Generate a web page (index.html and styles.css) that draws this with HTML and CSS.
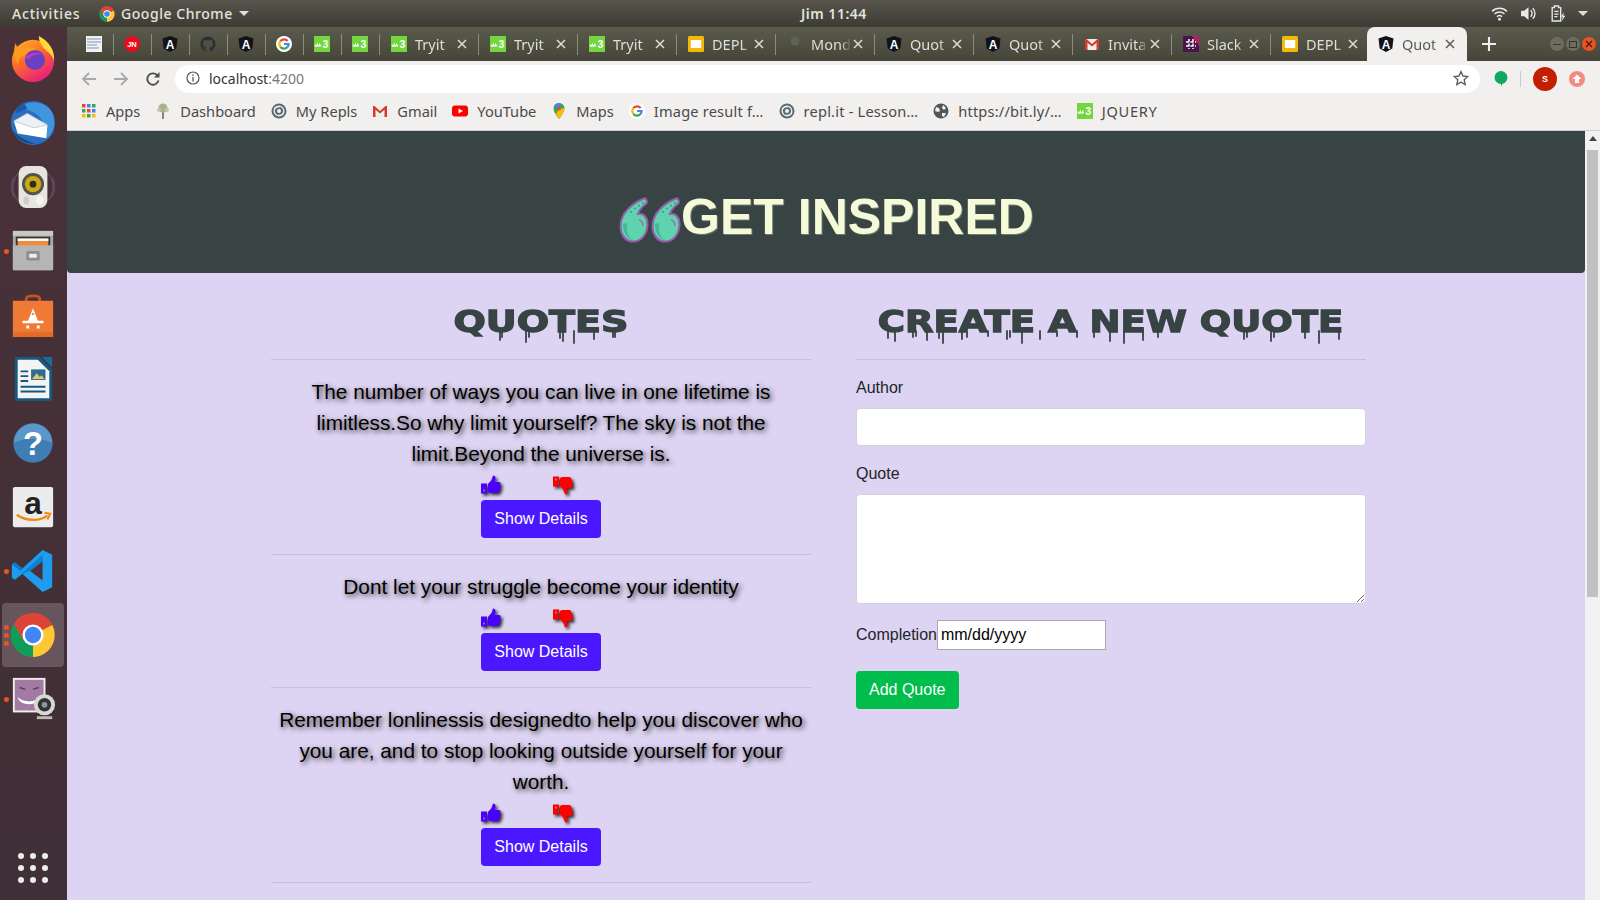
FILE: index.html
```html
<!DOCTYPE html>
<html lang="en">
<head>
<meta charset="utf-8">
<title>Quotes</title>
<link rel="stylesheet" href="styles.css">
</head>
<body>
<svg class="defs" aria-hidden="true">
  <symbol id="ng" viewBox="0 0 16 16"><path d="M8 0 15.500 2.600 14.300 12.500 8 16 1.700 12.500.5 2.600z" fill="#10131c"/><text x="8" y="12.600" text-anchor="middle" font-family="Liberation Sans" font-weight="700" font-size="12" fill="#fff">A</text></symbol>
  <symbol id="w3" viewBox="0 0 16 16"><rect width="16" height="16" fill="#73d63f"/><path d="M1 8.500c.5 2.500 1.500 2.500 2.300 0 .7 2.500 1.700 2.500 2.400 0 .4 1 .8 1.500 1.300 1.500" fill="none" stroke="#fff" stroke-width="1.200"/><text x="11.500" y="12" text-anchor="middle" font-family="Liberation Sans" font-weight="700" font-size="10.500" fill="#fff">3</text></symbol>
  <symbol id="slides" viewBox="0 0 16 16"><rect width="16" height="16" rx="1.500" fill="#f4b906"/><rect x="2.800" y="4" width="10.400" height="8" fill="#fff"/></symbol>
  <symbol id="gmail" viewBox="0 0 16 16"><rect x="1" y="3" width="14" height="11" fill="#eee"/><path d="M1 14V3h1.500L8 8l5.500-5H15v11h-2.500V6.800L8 10.500 3.500 6.800V14z" fill="#d33b2c"/></symbol>
  <symbol id="goog" viewBox="0 0 16 16"><circle cx="8" cy="8" r="8" fill="#fff"/><g fill="none" stroke-width="2.200"><path d="M11.700 5A4.700 4.700 0 0 0 4.300 5.200" stroke="#ea4335"/><path d="M4.300 5.200a4.700 4.700 0 0 0 0 5.600" stroke="#fbbc05"/><path d="M4.300 10.800a4.700 4.700 0 0 0 7.200 .3" stroke="#34a853"/><path d="M8 8h4.600a4.700 4.700 0 0 1-1.100 3.100" stroke="#4285f4"/></g></symbol>
  <symbol id="repl" viewBox="0 0 16 16"><circle cx="8" cy="8" r="7.500" fill="#5b6c74"/><circle cx="8" cy="8" r="4.800" fill="none" stroke="#f1f0ee" stroke-width="1.300"/><path d="M3 6.500a5 5 0 0 1 6-2.500M13 9.500a5 5 0 0 1-6 2.500" fill="none" stroke="#f1f0ee" stroke-width="1.100"/><circle cx="8" cy="8" r="2" fill="#f1f0ee"/></symbol>
  <symbol id="chrome" viewBox="0 0 48 48"><circle cx="24" cy="24" r="23" fill="#db4437"/><path d="M24 24 44 13.500A23 23 0 0 1 24 47z" fill="#fcc934"/><path d="M24 24 24 47A23 23 0 0 1 4 12.500z" fill="#0f9d58"/><path d="M24 13H44A23 23 0 0 0 4 12.500L14 30z" fill="#db4437"/><circle cx="24" cy="24" r="11" fill="#fff"/><circle cx="24" cy="24" r="8.500" fill="#4285f4"/></symbol>
  <symbol id="up" viewBox="0 0 20 20"><path d="M7 9 10.500 5 12 .5c2.200 0 3.200 2 2.300 4.500L13.500 7H18c1.800 0 2.200 2.200 1 3 1 1 .8 2.500-.2 3.200.5 1 .3 2.200-.8 2.800 .2 1.200-.7 2-2 2H10.500C9 18 8 17.500 7 17z" fill="currentColor"/><path d="M0 8.500h6v10H0z" fill="currentColor"/><path d="M2 14.500h2v2H2z" fill="#fff" opacity=".35"/></symbol>
  <symbol id="down" viewBox="0 0 20 20"><g transform="matrix(1 0 0 -1 0 20)"><path d="M7 9 10.500 5 12 .5c2.200 0 3.200 2 2.300 4.500L13.500 7H18c1.800 0 2.200 2.200 1 3 1 1 .8 2.500-.2 3.200.5 1 .3 2.200-.8 2.800 .2 1.200-.7 2-2 2H10.500C9 18 8 17.500 7 17z" fill="currentColor"/><path d="M0 8.500h6v10H0z" fill="currentColor"/><path d="M2 14.500h2v2H2z" fill="#fff" opacity=".35"/></g></symbol>
  <symbol id="comma" viewBox="0 0 30 46"><path d="M25 1.500c2-.8 3.500 3 2.500 5-3.500 2.500-7 6-8.500 10.500 5.500-1 9.500 3 9.500 10 0 9-5 16.500-13 17.500C7 45.500 1.500 38 1.500 29 1.500 17 12 6.500 25 1.500z" fill="#5fd3ae" stroke="#9a58a8" stroke-width="2"/><path d="M4 27c0 8 4 15 10 16-5-3-7-9-6-17z" fill="#43b796"/><g fill="#3c9a84"><circle cx="12" cy="15" r="1"/><circle cx="16" cy="11.500" r="1"/><circle cx="20" cy="8.500" r="1"/><circle cx="24" cy="6" r="1"/></g><path d="M20 23c3 1 4 3 4 6" fill="none" stroke="#a46cb0" stroke-width="1.500"/></symbol>
  <symbol id="x" viewBox="0 0 10 10"><path d="M1 1 9 9M9 1 1 9" stroke="currentColor" stroke-width="1.500" fill="none"/></symbol>
</svg>

<header class="topbar">
  <span class="activities">Activities</span>
  <span class="appmenu"><svg class="ic16"><use href="#chrome"/></svg>Google Chrome<i class="caret"></i></span>
  <span class="clock">Jim 11:44</span>
  <span class="tray">
    <svg class="tray-ic" viewBox="0 0 16 16"><path d="M1 6a10 10 0 0 1 14 0M3.300 8.500a7 7 0 0 1 9.400 0M5.600 11a3.600 3.600 0 0 1 4.800 0" fill="none" stroke="#e8e8e4" stroke-width="1.400"/><circle cx="8" cy="13.500" r="1.400" fill="#e8e8e4"/></svg>
    <svg class="tray-ic" viewBox="0 0 16 16"><path d="M1 5.500h3L8 2v12L4 10.500H1z" fill="#e8e8e4"/><path d="M10 5a4 4 0 0 1 0 6M12 3a7 7 0 0 1 0 10" fill="none" stroke="#e8e8e4" stroke-width="1.300"/></svg>
    <svg class="tray-ic" viewBox="0 0 16 16"><path d="M3 2.500h2V1h4v1.500h2V15H3z" fill="none" stroke="#e8e8e4" stroke-width="1.300"/><path d="M5 6h4M5 8.500h4M5 11h3" stroke="#e8e8e4" stroke-width="1.200"/><path d="M14 7l-3 4h2l-1 4 3.500-5h-2z" fill="#e8e8e4"/></svg>
    <i class="caret"></i>
  </span>
</header>

<div class="desktop">
  <nav class="dock">
    <div class="dock-item"><svg class="dock-ic" viewBox="0 0 48 48"><defs><linearGradient id="ff" x1="0" y1="0" x2=".6" y2="1"><stop offset="0" stop-color="#ffc020"/><stop offset=".5" stop-color="#ff6a2a"/><stop offset="1" stop-color="#e8207a"/></linearGradient></defs><circle cx="24" cy="26" r="22" fill="url(#ff)"/><path d="M30 0c10 5 17 14 16 26-2-8-9-10-12-15-2-3-4-6-4-11z" fill="#ffd83a"/><path d="M6 7c1 5 3 6 6 7 5-3 12-3 17 1l-4 5C18 17 8 20 9 30 4 24 3 15 6 7z" fill="#ff9a1f"/><circle cx="26" cy="25" r="10.500" fill="#6a3fc4"/><path d="M16 23c3-6 14-8 20-2-5-3-13-2-16 3z" fill="#c13bb0"/></svg></div>
    <div class="dock-item"><svg class="dock-ic" viewBox="0 0 48 48"><circle cx="24" cy="24" r="23" fill="#2a6fc0"/><path d="M10 8c8-7 24-8 32 2 6 8 6 22-3 30-1-8-3-18-10-24C22 10 15 9 10 8z" fill="#3d96de"/><path d="M1 30c4 8 12 16 26 16-10-3-20-8-26-16z" fill="#16407e"/><path d="M14 3c-5 2-8 6-8 11l6-2 6-4z" fill="#1c5aa8"/><path d="M4 22 18 14l21 12-1 14L8 35z" fill="#fff"/><path d="M4 22 18 14l21 12-14 3z" fill="#eef1f4" stroke="#b9c2cc" stroke-width=".8"/></svg></div>
    <div class="dock-item"><svg class="dock-ic" viewBox="0 0 48 48"><g fill="none" stroke="#5d4a60" stroke-width="1.500"><path d="M8 10a22 22 0 0 0 0 28M40 10a22 22 0 0 1 0 28M4 14a22 22 0 0 0 0 20M44 14a22 22 0 0 1 0 20"/></g><rect x="9" y="2" width="30" height="44" rx="8" fill="#e6e6de"/><circle cx="24" cy="21" r="11.500" fill="#55534a"/><circle cx="24" cy="21" r="8.500" fill="#c9a914"/><circle cx="24" cy="21" r="3.500" fill="#2e2c25"/><ellipse cx="17" cy="38" rx="3" ry="4" fill="#ccc"/><ellipse cx="31" cy="38" rx="4" ry="5" fill="#f4f4f0"/></svg></div>
    <div class="dock-item run"><i class="pip"></i><svg class="dock-ic" viewBox="0 0 48 48"><path d="M5 3h38l2 3v36l-2 2H5l-2-2V6z" fill="#a9a9a7"/><rect x="3" y="3" width="42" height="5" fill="#c9c9c7"/><rect x="6" y="9" width="36" height="10" fill="#3a3836"/><rect x="8" y="11" width="32" height="8" fill="#ee8a3d"/><rect x="8" y="11" width="32" height="2.500" fill="#fff"/><path d="M3 18h42v26H3z" fill="#b5b5b3"/><rect x="17" y="24" width="14" height="10" rx="1.500" fill="#8e8e8c"/><rect x="20" y="27" width="8" height="4" fill="#eee"/></svg></div>
    <div class="dock-item"><svg class="dock-ic" viewBox="0 0 48 48"><path d="M17 12V7c0-4 14-4 14 0v5" fill="none" stroke="#c7531f" stroke-width="3"/><path d="M3 9h42v38H3z" fill="#ef7a35"/><path d="M3 42h42v5H3z" fill="#e46a28"/><path d="M24 17 30 32H18z" fill="#fff"/><path d="M22.500 24 24 21 25.500 24z" fill="#ef7a35"/><path d="M13 30h22v2.500H13zM17 35h3v3h-3zM28 35h3v3h-3z" fill="#fff"/></svg></div>
    <div class="dock-item"><svg class="dock-ic" viewBox="0 0 48 48"><path d="M5 1h26l13 13v30a3 3 0 0 1-3 3H5z" fill="#16587f"/><path d="M33 1h11v11z" fill="#1a6a9a"/><path d="M8 4h21l12 12v28H8z" fill="#f3f3f3"/><path d="M11 15h8v2h-8zM11 20h8v2h-8zM11 25h8v2h-8zM11 31h26v2H11zM11 36h26v2H11z" fill="#16587f"/><rect x="22" y="14" width="15" height="11" fill="#2c6c94"/><path d="M23 24l5-6 3 4 2-2 3 4z" fill="#e8c46a"/></svg></div>
    <div class="dock-item"><svg class="dock-ic" viewBox="0 0 48 48"><circle cx="24" cy="24" r="20.500" fill="#3f7eb5"/><path d="M4 24a20 20 0 0 1 40 0c-10-6-30-6-40 0z" fill="#5b97ca"/><text x="24" y="37" text-anchor="middle" font-family="Liberation Sans" font-weight="700" font-size="34" fill="#fff">?</text></svg></div>
    <div class="dock-item"><svg class="dock-ic" viewBox="0 0 48 48"><rect x="3" y="3" width="42" height="42" rx="2" fill="#ececec"/><text x="24" y="31" text-anchor="middle" font-family="Liberation Sans" font-weight="700" font-size="33" fill="#222">a</text><path d="M7 32c10 7 24 7 32 1" fill="none" stroke="#f08a12" stroke-width="2.500"/><path d="M36 30l6 1-3 6" fill="none" stroke="#f08a12" stroke-width="2"/></svg></div>
    <div class="dock-item run"><i class="pip"></i><svg class="dock-ic" viewBox="0 0 48 48"><path d="M34 2 44 7v34l-10 5-21-19-8 6-3-2v-14l3-2 8 6z" fill="#1f9cf0"/><path d="M34 2 13 21 5 15l-3 2 9 7 23-22z" fill="#0a78c8"/><path d="M2 31l3 2L34 7v10L13 27 5 33z" fill="#0a78c8" opacity=".8"/><path d="M34 14v20L21 24z" fill="#4a3138"/></svg></div>
    <div class="dock-item run active"><i class="pip"></i><i class="pip"></i><i class="pip"></i><svg class="dock-ic"><use href="#chrome"/></svg></div>
    <div class="dock-item run"><i class="pip"></i><svg class="dock-ic" viewBox="0 0 48 48"><rect x="3" y="2" width="34" height="36" fill="#eee"/><rect x="5" y="4" width="30" height="32" fill="#a37aa4"/><path d="M8 22c6 6 18 6 24 0-2 10-22 10-24 0z" fill="#fff"/><path d="M10 12l6 2M24 14l6-2" stroke="#5d3f60" stroke-width="1.500"/><circle cx="36" cy="30" r="11" fill="#d8d8d4"/><circle cx="36" cy="30" r="7" fill="#333"/><circle cx="36" cy="30" r="3" fill="#8a98a0"/><path d="M28 42h16v3H28z" fill="#bbb"/></svg></div>
    <div class="dock-grid"><i></i><i></i><i></i><i></i><i></i><i></i><i></i><i></i><i></i></div>
  </nav>

  <div class="browser">
    <div class="tabstrip">
      <div class="tab mini"><svg class="ic16" viewBox="0 0 16 16"><rect width="16" height="16" fill="#f2f2f2"/><path d="M1 3h14M1 6h14M1 9h10M1 12h12" stroke="#7f95b8" stroke-width="1.200"/></svg></div>
      <div class="tab mini"><svg class="ic16" viewBox="0 0 16 16"><circle cx="8" cy="8" r="8" fill="#e60d1c"/><text x="8" y="11" text-anchor="middle" font-family="Liberation Sans" font-weight="700" font-size="7.500" fill="#fff">JN</text></svg></div>
      <div class="tab mini"><svg class="ic16"><use href="#ng"/></svg></div>
      <div class="tab mini"><svg class="ic16" viewBox="0 0 16 16"><path d="M8 .5a7.700 7.700 0 0 0-2.400 15c.4 0 .5-.2.500-.4v-1.400c-2.100.5-2.600-1-2.600-1-.3-.9-.8-1.100-.8-1.100-.7-.5 0-.5 0-.5.800 0 1.200.8 1.200.8.700 1.200 1.800.9 2.200.7 0-.5.300-.9.500-1.100-1.700-.2-3.500-.9-3.500-3.800 0-.8.300-1.500.8-2-.1-.2-.3-1 .1-2 0 0 .6-.2 2.100.8a7 7 0 0 1 3.800 0c1.500-1 2.100-.8 2.100-.8.400 1 .2 1.800.1 2 .5.500.8 1.200.8 2 0 2.900-1.800 3.600-3.500 3.800.3.200.5.700.5 1.400v2.100c0 .2.100.4.500.4A7.700 7.700 0 0 0 8 .5z" fill="#2c3030"/></svg></div>
      <div class="tab mini"><svg class="ic16"><use href="#ng"/></svg></div>
      <div class="tab mini"><svg class="ic16"><use href="#goog"/></svg></div>
      <div class="tab mini"><svg class="ic16"><use href="#w3"/></svg></div>
      <div class="tab mini"><svg class="ic16"><use href="#w3"/></svg></div>
      <div class="tab"><svg class="ic16"><use href="#w3"/></svg><span class="tab-title">Tryit</span><svg class="tab-x"><use href="#x"/></svg></div>
      <div class="tab"><svg class="ic16"><use href="#w3"/></svg><span class="tab-title">Tryit</span><svg class="tab-x"><use href="#x"/></svg></div>
      <div class="tab"><svg class="ic16"><use href="#w3"/></svg><span class="tab-title">Tryit</span><svg class="tab-x"><use href="#x"/></svg></div>
      <div class="tab"><svg class="ic16"><use href="#slides"/></svg><span class="tab-title">DEPL</span><svg class="tab-x"><use href="#x"/></svg></div>
      <div class="tab"><svg class="ic16" viewBox="0 0 16 16"><path d="M8 15V7" stroke="#4a4f3a" stroke-width="1.500"/><circle cx="8" cy="5" r="4.500" fill="#5c6650"/></svg><span class="tab-title">Mond</span><svg class="tab-x"><use href="#x"/></svg></div>
      <div class="tab"><svg class="ic16"><use href="#ng"/></svg><span class="tab-title">Quot</span><svg class="tab-x"><use href="#x"/></svg></div>
      <div class="tab"><svg class="ic16"><use href="#ng"/></svg><span class="tab-title">Quot</span><svg class="tab-x"><use href="#x"/></svg></div>
      <div class="tab"><svg class="ic16"><use href="#gmail"/></svg><span class="tab-title">Invita</span><svg class="tab-x"><use href="#x"/></svg></div>
      <div class="tab"><svg class="ic16" viewBox="0 0 16 16"><rect width="16" height="16" fill="#4a154b"/><path d="M9 0h7v10z" fill="#b81f5a"/><path d="M3 6h10M3 10h10M6 3v10M10 3v10" stroke="#fff" stroke-width="1.500" stroke-dasharray="3 1.500"/></svg><span class="tab-title">Slack</span><svg class="tab-x"><use href="#x"/></svg></div>
      <div class="tab last"><svg class="ic16"><use href="#slides"/></svg><span class="tab-title">DEPL</span><svg class="tab-x"><use href="#x"/></svg></div>
      <div class="tab current"><svg class="ic16"><use href="#ng"/></svg><span class="tab-title">Quot</span><svg class="tab-x"><use href="#x"/></svg></div>
      <svg class="newtab" viewBox="0 0 12 12"><path d="M6 0v12M0 6h12" stroke="#eee" stroke-width="1.800"/></svg>
      <div class="winbtns">
        <span class="winbtn"><i class="wb-min"></i></span>
        <span class="winbtn"><i class="wb-max"></i></span>
        <span class="winbtn close"><svg viewBox="0 0 10 10"><path d="M2 2l6 6M8 2 2 8" stroke="#3d2012" stroke-width="1.400"/></svg></span>
      </div>
    </div>

    <div class="toolbar">
      <svg class="nav-ic" viewBox="0 0 16 16"><path d="M15 8H2M8 2 2 8l6 6" fill="none" stroke="#a9a9a9" stroke-width="1.800"/></svg>
      <svg class="nav-ic" viewBox="0 0 16 16"><path d="M1 8h13M8 2l6 6-6 6" fill="none" stroke="#a9a9a9" stroke-width="1.800"/></svg>
      <svg class="nav-ic" viewBox="0 0 16 16"><path d="M13.500 9.500A5.700 5.700 0 1 1 12 4" fill="none" stroke="#4a4a4a" stroke-width="1.800"/><path d="M14.500 1v5.500H9z" fill="#4a4a4a"/></svg>
      <div class="omnibox">
        <svg class="info" viewBox="0 0 14 14"><circle cx="7" cy="7" r="6" fill="none" stroke="#555" stroke-width="1.200"/><path d="M7 6v4.500M7 3.500v1.400" stroke="#555" stroke-width="1.300"/></svg>
        <span class="url">localhost<span class="port">:4200</span></span>
        <svg class="star" viewBox="0 0 16 16"><path d="M8 1.500l2 4.500 4.800.5-3.600 3.200 1 4.800L8 12.100l-4.200 2.400 1-4.800L1.200 6.500 6 6z" fill="none" stroke="#5f6368" stroke-width="1.400"/></svg>
      </div>
      <div class="extensions">
        <svg class="hang" viewBox="0 0 14 16"><path d="M7 0a6.500 6.500 0 0 1 1.500 12.800L7 15.500V13A6.500 6.500 0 0 1 7 0z" fill="#0ea960"/></svg>
        <i class="ext-div"></i>
        <span class="avatar">S</span>
        <svg class="upd" viewBox="0 0 16 16"><circle cx="8" cy="8" r="8" fill="#f28b82"/><path d="M8 3.500 12.500 8H10v4H6V8H3.500z" fill="#fff"/></svg>
      </div>
    </div>

    <div class="bookmarks">
      <span class="bm"><svg class="ic14" viewBox="0 0 14 14"><g><rect width="3.500" height="3.500" fill="#e8453c"/><rect x="5" width="3.500" height="3.500" fill="#4285f4"/><rect x="10" width="3.500" height="3.500" fill="#34a853"/><rect y="5" width="3.500" height="3.500" fill="#34a853"/><rect x="5" y="5" width="3.500" height="3.500" fill="#e8453c"/><rect x="10" y="5" width="3.500" height="3.500" fill="#4285f4"/><rect y="10" width="3.500" height="3.500" fill="#fbbc05"/><rect x="5" y="10" width="3.500" height="3.500" fill="#34a853"/><rect x="10" y="10" width="3.500" height="3.500" fill="#fbbc05"/></g></svg>Apps</span>
      <span class="bm"><svg class="ic16" viewBox="0 0 16 16"><path d="M8 8v8" stroke="#7b7b6a" stroke-width="1.800"/><circle cx="8" cy="5" r="4.500" fill="#a9b38c"/><circle cx="4" cy="7" r="2" fill="#c2c7aa"/><circle cx="12" cy="7" r="2" fill="#c2c7aa"/></svg>Dashboard</span>
      <span class="bm"><svg class="ic16"><use href="#repl"/></svg>My Repls</span>
      <span class="bm"><svg class="ic16"><use href="#gmail"/></svg>Gmail</span>
      <span class="bm"><svg class="ic16" viewBox="0 0 16 16"><rect y="2.500" width="16" height="11" rx="3" fill="#f00"/><path d="M6.500 5.500v5L11 8z" fill="#fff"/></svg>YouTube</span>
      <span class="bm"><svg class="ic16" viewBox="0 0 16 16"><path d="M8 0a5.500 5.500 0 0 0-5.500 5.500C2.500 9.500 8 16 8 16s5.500-6.500 5.500-10.500A5.500 5.500 0 0 0 8 0z" fill="#34a853"/><path d="M3.200 3 8 5.500 10 .5A5.500 5.500 0 0 0 3.200 3z" fill="#4285f4"/><path d="M13.500 5.500 8 5.500 5 11.300 8 16s5.500-6.500 5.500-10.500z" fill="#fbbc05"/><circle cx="8" cy="5.500" r="2" fill="#e8453c"/></svg>Maps</span>
      <span class="bm bm-long"><svg class="ic16"><use href="#goog"/></svg>Image result f…</span>
      <span class="bm bm-long"><svg class="ic16"><use href="#repl"/></svg>repl.it - Lesson…</span>
      <span class="bm bm-long"><svg class="ic16" viewBox="0 0 16 16"><circle cx="8" cy="8" r="7.500" fill="#555"/><path d="M3 4l3 1 1 3-2 1-3-1zM10 2l3 3-2 2-2-2zM9 10h4l-2 4-2-1z" fill="#f1f0ee"/></svg>https://bit.ly/…</span>
      <span class="bm bm-caps"><svg class="ic16"><use href="#w3"/></svg>JQUERY</span>
    </div>

    <div class="viewport">
      <div class="page">
        <header class="hero">
          <svg class="quote-ic" viewBox="0 0 62 46"><use href="#comma" width="30" height="46"/><use href="#comma" x="32" width="30" height="46"/></svg>
          <h1 class="hero-title">GET INSPIRED</h1>
        </header>
        <main class="columns">
          <section class="col-quotes">
            <div class="col-head">
              <h2 class="wet wet-short">QUOTES</h2>
              <svg class="drips" viewBox="0 0 540 86"><path d="M229 58v9M231 58v6M255 58v11M258 58v6M289 58v7M292 58v10M303 58v12M323 58v8M342 58v6M344 58v6"/></svg>
            </div>
            <hr class="rule">
            <article class="quote">
              <p class="quote-text">The number of ways you can live in one lifetime is limitless.So why limit yourself? The sky is not the limit.Beyond the universe is.</p>
              <div class="votes"><svg class="thumb like"><use href="#up"/></svg><svg class="thumb dislike"><use href="#down"/></svg></div>
              <button class="btn btn-blue" type="button">Show Details</button>
            </article>
            <hr class="rule">
            <article class="quote">
              <p class="quote-text">Dont let your struggle become your identity</p>
              <div class="votes"><svg class="thumb like"><use href="#up"/></svg><svg class="thumb dislike"><use href="#down"/></svg></div>
              <button class="btn btn-blue" type="button">Show Details</button>
            </article>
            <hr class="rule">
            <article class="quote">
              <p class="quote-text">Remember lonlinessis designedto help you discover who you are, and to stop looking outside yourself for your worth.</p>
              <div class="votes"><svg class="thumb like"><use href="#up"/></svg><svg class="thumb dislike"><use href="#down"/></svg></div>
              <button class="btn btn-blue" type="button">Show Details</button>
            </article>
            <hr class="rule">
          </section>
          <section class="col-form">
            <div class="col-head">
              <h2 class="wet">CREATE A NEW QUOTE</h2>
              <svg class="drips" viewBox="0 0 510 86"><path d="M32 58v7M39 58v10M57 58v6M60 58v5M71 58v9M83 58v7M87 58v12M106 58v8M111 58v6M132 58v5M151 58v8M154 58v6M166 58v12M184 58v8M201 58v5M221 58v6M238 58v6M254 58v10M268 58v12M287 58v9M302 58v6M388 58v8M391 58v6M415 58v10M418 58v6M449 58v7M463 58v12M483 58v8"/></svg>
            </div>
            <hr class="rule">
            <form class="quote-form">
              <div class="field"><label class="lbl" for="author">Author</label><input class="control" id="author" type="text"></div>
              <div class="field"><label class="lbl" for="quote">Quote</label><textarea class="control area" id="quote"></textarea></div>
              <div class="date-row"><label class="date-lbl" for="done">Completion</label><input class="date" id="done" type="text" value="mm/dd/yyyy"></div>
              <button class="btn btn-green" type="button">Add Quote</button>
            </form>
          </section>
        </main>
      </div>
      <div class="scrollbar"><i class="sb-up"></i><i class="sb-thumb"></i></div>
    </div>
  </div>
</div>
</body>
</html>
```

FILE: styles.css
```css
* { box-sizing: border-box; }
html, body { margin: 0; height: 100%; }
body { display: flex; flex-direction: column; height: 900px; overflow: hidden; font-family: "Liberation Sans", Arial, sans-serif; background: #3f2e35; }
.defs { display: none; }
.ic16 { width: 16px; height: 16px; flex: none; }
.ic14 { width: 14px; height: 14px; flex: none; margin: 0 1px; }

/* top bar */
.topbar { height: 27px; flex: none; display: flex; align-items: center; position: relative; padding: 0 0 0 12px; background: linear-gradient(#57554b, #3c3b34); color: #e4e4de; font: 500 14px "Noto Sans", sans-serif; }
.activities { width: 87px; letter-spacing: .8px; }
.appmenu { display: flex; align-items: center; gap: 6px; letter-spacing: .55px; }
.caret { display: inline-block; width: 0; height: 0; border: 5px solid transparent; border-top: 5px solid #ddd; border-bottom: 0; }
.clock { position: absolute; left: 801px; top: 4px; font-weight: 600; font-size: 14px; letter-spacing: .5px; }
.tray { margin-left: auto; display: flex; align-items: center; gap: 12px; padding-right: 12px; }
.tray-ic { width: 17px; height: 17px; }

/* desktop */
.desktop { flex: 1; min-height: 0; display: flex; }
.dock { width: 67px; flex: none; display: flex; flex-direction: column; background: linear-gradient(#4a3138, #3f2f36); }
.dock-item { height: 64px; flex: none; display: flex; align-items: center; justify-content: center; position: relative; margin: 0 3px 0 2px; border-radius: 4px; }
.dock-ic { width: 46px; height: 46px; }
.dock-item.active { background: #66555c; }
.pip { position: absolute; left: 2px; top: 50%; width: 5px; height: 5px; margin-top: -2px; border-radius: 50%; background: #e95420; }
.active .pip:nth-child(1) { margin-top: -10px; }
.active .pip:nth-child(3) { margin-top: 6px; }
.dock-grid { margin-top: auto; margin-bottom: 17px; margin-left: -1px; align-self: center; display: grid; grid-template-columns: repeat(3, 6px); gap: 6px; }
.dock-grid i { width: 6px; height: 6px; border-radius: 50%; background: #eee; }

/* chrome */
.browser { flex: 1; min-width: 0; display: flex; flex-direction: column; }
.tabstrip { height: 34px; flex: none; display: flex; align-items: stretch; padding-left: 9px; background: linear-gradient(#5a5a4c, #45453a); position: relative; }
.tab { width: 99px; flex: none; display: flex; align-items: center; padding: 0 12px 0 11px; position: relative; color: #dededa; font: 14.5px "Noto Sans", sans-serif; }
.tab::after { content: ""; position: absolute; right: 0; top: 7px; height: 21px; width: 1px; background: #8b8b80; }
.tab.mini { width: 38px; padding: 0 0 0 10px; }
.tab.last { width: 96px; padding-right: 9px; }
.tab.last::after { display: none; }
.tab-title { flex: 1; min-width: 0; margin-left: 8px; overflow: hidden; white-space: nowrap; -webkit-mask-image: linear-gradient(90deg, #000 75%, transparent 100%); mask-image: linear-gradient(90deg, #000 75%, transparent 100%); }
.tab-x { width: 10px; height: 10px; flex: none; margin-left: 2px; }
.tab.current { width: 100px; background: #f1f0ee; color: #5a5a5a; border-radius: 8px 8px 0 0; }
.tab.current::after { display: none; }
.newtab { width: 14px; height: 14px; align-self: center; margin-left: 15px; flex: none; }
.winbtns { margin-left: auto; display: flex; align-items: center; gap: 2px; padding-right: 4px; }
.winbtn { width: 14px; height: 14px; border-radius: 50%; background: #6d6d62; display: flex; align-items: center; justify-content: center; }
.winbtn.close { background: #e95420; }
.winbtn svg { width: 10px; height: 10px; }
.wb-min { width: 8px; height: 1px; background: #333; }
.wb-max { width: 8px; height: 7px; border: 1px solid #333; }

.toolbar { height: 36px; flex: none; display: flex; align-items: center; padding: 0 10px 0 14px; background: #f1f0ee; }
.nav-ic { width: 16px; height: 16px; margin-right: 16px; flex: none; }
.omnibox { width: 1305px; height: 28px; margin-left: -2px; flex: none; display: flex; align-items: center; padding: 0 11px 2px 11px; border-radius: 14px; background: #fff; font: 14px "Noto Sans", sans-serif; color: #333; }
.info { width: 14px; height: 14px; margin-right: 9px; }
.port { color: #777; }
.star { width: 16px; height: 16px; margin-left: auto; }
.extensions { display: flex; align-items: center; margin-left: 14px; }
.hang { width: 14px; height: 16px; }
.ext-div { width: 1px; height: 16px; background: #ccc; margin: 0 12px; }
.avatar { width: 24px; height: 24px; border-radius: 50%; background: #c41e00; color: #fff; font-size: 9px; font-weight: 700; display: flex; align-items: center; justify-content: center; }
.upd { width: 16px; height: 16px; margin-left: 12px; }

.bookmarks { height: 34px; flex: none; display: flex; align-items: center; gap: 15px; padding: 0 0 5px 14px; background: #f1f0ee; border-bottom: 1px solid #cfcfcd; font: 14.6px "Noto Sans", sans-serif; color: #4a4a4a; }
.bm { display: flex; align-items: center; gap: 9px; white-space: nowrap; }
.bm-long { letter-spacing: .2px; }
.bm-caps { letter-spacing: .7px; }

.viewport { flex: 1; min-height: 0; display: flex; }
.page { flex: 1; min-width: 0; overflow: hidden; background: #ddd3f2; }
.scrollbar { width: 15px; flex: none; display: flex; flex-direction: column; align-items: center; background: #f1f1f1; }
.sb-up { width: 0; height: 0; margin-top: 5px; border: 4px solid transparent; border-top: 0; border-bottom: 5px solid #444; }
.sb-thumb { width: 11px; height: 447px; margin-top: 9px; background: #c1c1c1; }

/* page */
.hero { height: 142px; display: flex; align-items: flex-end; justify-content: center; padding: 0 0 30px 1px; background: #384344; border-radius: 0 0 4px 4px; }
.quote-ic { width: 62px; height: 46px; flex: none; margin-bottom: 0; }
.hero-title { margin: 0; font: 700 50px/52px "Liberation Sans", Arial, sans-serif; color: #f5fbd9; text-shadow: 1px 1px 0 #6d7a6d; }
.columns { display: flex; gap: 45px; padding-left: 204px; }
.col-quotes { width: 540px; flex: none; }
.col-form { width: 510px; flex: none; }
.col-head { height: 86px; padding-top: 32px; text-align: center; position: relative; }
.wet { display: inline-block; margin: 0; font: 700 30px/34px "DejaVu Sans", sans-serif; color: #384344; -webkit-text-stroke: 1.300px #384344; transform: scaleX(1.235); white-space: nowrap; }
.wet-short { transform: scaleX(1.27); }
.drips { position: absolute; left: 0; top: 0; width: 100%; height: 100%; }
.drips path { stroke: #384344; stroke-width: 1.800; stroke-linecap: round; fill: none; }
.rule { height: 1px; margin: 0; border: 0; background: #c7bfd9; }
.quote { padding: 16px 0; text-align: center; }
.quote-text { margin: 0; font-size: 20.8px; line-height: 31px; color: #000; text-shadow: 2px 2px 5px #333; }
.votes { width: 120px; height: 31px; margin: 0 auto; display: flex; align-items: center; gap: 52px; }
.thumb { width: 20px; height: 20px; filter: drop-shadow(2px 2px 1.500px #333); }
.like { color: #4a00ff; }
.dislike { color: #f00; }
.btn { display: inline-block; height: 38px; padding: 6px 12px; border: 1px solid transparent; border-radius: 4px; font: 16px/24px "Liberation Sans", Arial, sans-serif; color: #fff; }
.btn-blue { background: #4a17ff; }
.btn-green { background: #00bd4c; }
.quote-form { padding-top: 16px; }
.field { margin-bottom: 16px; }
.lbl { display: block; margin-bottom: 8px; font-size: 16px; line-height: 24px; color: #212529; }
.control { display: block; width: 100%; height: 38px; padding: 6px 12px; border: 1px solid #ced4da; border-radius: 4px; background: #fff; font: 16px "Liberation Sans", Arial, sans-serif; }
.area { height: 110px; }
.date-row { display: flex; align-items: center; height: 30px; margin-bottom: 21px; margin-top: 16px; font-size: 16px; color: #212529; }
.date { width: 169px; height: 30px; padding: 1px 3px; border: 1.500px solid #aaa; background: #fff; color: #000; font: 16px "Liberation Sans", Arial, sans-serif; }
```
